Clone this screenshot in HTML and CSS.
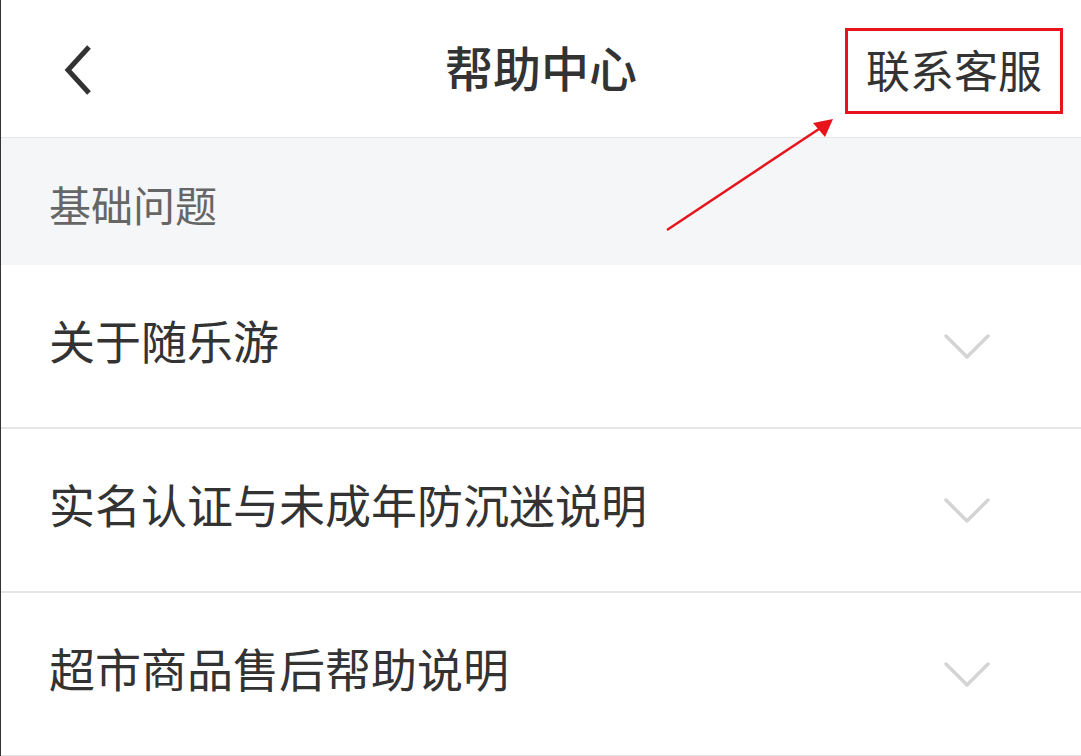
FILE: index.html
```html
<!DOCTYPE html>
<html lang="zh-CN">
<head>
    <meta charset="UTF-8">
    <meta name="viewport" content="width=device-width, initial-scale=1.0">
    <title>帮助中心</title>
    <link rel="stylesheet" href="styles.css">
</head>
<body>
    <div class="page">
        <div class="header">
            <div class="header-left">
                <svg class="back-icon" width="30" height="50" viewBox="0 0 30 50">
                    <polyline points="25,2 4,25 25,48" fill="none" stroke="#333" stroke-width="5" stroke-linejoin="miter"/>
                </svg>
            </div>
            <h1 class="title">帮助中心</h1>
            <div class="header-right">
                <button class="contact-btn">联系客服</button>
            </div>
        </div>

        <div class="section-title">基础问题</div>

        <div class="faq-list">
            <div class="faq-item">
                <span class="faq-text">关于随乐游</span>
                <svg class="chevron" width="46" height="28" viewBox="0 0 46 28">
                    <polyline points="2,3 23,24 44,3" fill="none" stroke="#d4d4d4" stroke-width="3.5" stroke-linecap="round" stroke-linejoin="round"/>
                </svg>
            </div>
            <div class="faq-item">
                <span class="faq-text">实名认证与未成年防沉迷说明</span>
                <svg class="chevron" width="46" height="28" viewBox="0 0 46 28">
                    <polyline points="2,3 23,24 44,3" fill="none" stroke="#d4d4d4" stroke-width="3.5" stroke-linecap="round" stroke-linejoin="round"/>
                </svg>
            </div>
            <div class="faq-item">
                <span class="faq-text">超市商品售后帮助说明</span>
                <svg class="chevron" width="46" height="28" viewBox="0 0 46 28">
                    <polyline points="2,3 23,24 44,3" fill="none" stroke="#d4d4d4" stroke-width="3.5" stroke-linecap="round" stroke-linejoin="round"/>
                </svg>
            </div>
        </div>

        <!-- annotation arrow pointing at the contact button -->
        <svg class="pointer" width="1081" height="756" viewBox="0 0 1081 756">
            <line x1="667" y1="230" x2="822" y2="127" stroke="#e8141c" stroke-width="2.5"/>
            <polygon points="833,119 813,123 825,137" fill="#e8141c"/>
        </svg>
    </div>
</body>
</html>
```

FILE: styles.css
```css
body {
    margin: 0;
    font-family: "Noto Sans CJK SC", "Noto Sans", sans-serif;
    background: #ffffff;
    color: #333333;
}

.page {
    position: relative;
    width: 1081px;
    height: 756px;
    box-sizing: border-box;
    border-left: 1px solid #333333;
    overflow: hidden;
}

.header {
    height: 137px;
    border-bottom: 1px solid #e6e6e6;
    display: grid;
    grid-template-columns: 1fr auto 1fr;
    align-items: center;
}

.header-left {
    padding-left: 63px;
    display: flex;
    align-items: center;
}

.back-icon {
    display: block;
    margin-top: 2px;
}

.title {
    margin: 0;
    font-size: 48px;
    font-weight: 500;
    color: #333333;
    line-height: 1;
    margin-top: -5px;
}

.header-right {
    display: flex;
    justify-content: flex-end;
    padding-right: 18px;
}

.contact-btn {
    font-family: inherit;
    font-size: 44px;
    color: #333333;
    background: #ffffff;
    border: 3px solid #e8141c;
    padding: 0 18px 4px;
    height: 86px;
    line-height: 76px;
    margin-top: 4px;
    cursor: pointer;
}

.section-title {
    height: 127px;
    box-sizing: border-box;
    padding: 4px 0 0 48px;
    background: #f5f6f8;
    color: #666666;
    font-size: 42px;
    display: flex;
    align-items: center;
}

.faq-item {
    height: 164px;
    box-sizing: border-box;
    border-bottom: 2px solid #e5e5e5;
    padding: 0 91px 0 48px;
    display: flex;
    align-items: center;
    justify-content: space-between;
}

.faq-text {
    font-size: 46px;
    color: #333333;
    margin-bottom: 14px;
}

.chevron {
    display: block;
    margin-top: 2px;
}

.pointer {
    position: absolute;
    top: 0;
    left: -1px;
    pointer-events: none;
}
```
